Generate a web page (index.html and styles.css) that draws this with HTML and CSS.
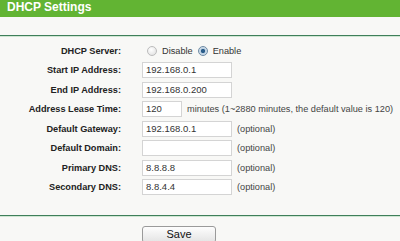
FILE: index.html
```html
<!DOCTYPE html>
<html>
<head>
<meta charset="utf-8">
<link rel="stylesheet" href="styles.css">
</head>
<body>
<div class="header">DHCP Settings</div>
<div class="sep"></div>
<div class="form">
  <div class="row">
    <div class="label">DHCP Server:</div>
    <div class="field">
      <span class="radio"></span><span class="rtext">Disable</span>
      <span class="radio on"></span><span class="rtext">Enable</span>
    </div>
  </div>
  <div class="row">
    <div class="label">Start IP Address:</div>
    <div class="field"><span class="input">192.168.0.1</span></div>
  </div>
  <div class="row">
    <div class="label">End IP Address:</div>
    <div class="field"><span class="input">192.168.0.200</span></div>
  </div>
  <div class="row">
    <div class="label">Address Lease Time:</div>
    <div class="field"><span class="input short">120</span><span class="note">minutes (1~2880 minutes, the default value is 120)</span></div>
  </div>
  <div class="row">
    <div class="label">Default Gateway:</div>
    <div class="field"><span class="input">192.168.0.1</span><span class="note">(optional)</span></div>
  </div>
  <div class="row">
    <div class="label">Default Domain:</div>
    <div class="field"><span class="input"></span><span class="note">(optional)</span></div>
  </div>
  <div class="row">
    <div class="label">Primary DNS:</div>
    <div class="field"><span class="input">8.8.8.8</span><span class="note">(optional)</span></div>
  </div>
  <div class="row">
    <div class="label">Secondary DNS:</div>
    <div class="field"><span class="input">8.8.4.4</span><span class="note">(optional)</span></div>
  </div>
</div>
<div class="sep bottom"></div>
<div class="actions"><span class="button">Save</span></div>
</body>
</html>
```
FILE: styles.css
```css
html, body {
  margin: 0;
  padding: 0;
  background: #f8f8f6;
  font-family: "Liberation Sans", Arial, sans-serif;
  color: #222;
  overflow: hidden;
}
.header {
  height: 17px;
  background: #62b433;
  color: #fff;
  font-weight: bold;
  font-size: 12px;
  line-height: 15px;
  padding-left: 7px;
  box-sizing: border-box;
}
.sep {
  margin-top: 18px;
  height: 1px;
  background: #3f7f5a;
  border-bottom: 1px solid #cfe6d2;
}
.form {
  padding-top: 4px;
}
.row {
  display: flex;
  align-items: center;
  height: 19.5px;
}
.label {
  width: 121px;
  flex: none;
  text-align: right;
  font-weight: bold;
  font-size: 9.2px;
  color: #222;
  white-space: nowrap;
}
.field {
  display: flex;
  align-items: center;
  padding-left: 21px;
  font-size: 9.2px;
  white-space: nowrap;
}
.input {
  box-sizing: border-box;
  flex: none;
  width: 90px;
  height: 16px;
  background: #fff;
  border: 1px solid #d4d4d4;
  font-size: 9.5px;
  line-height: 14px;
  padding-left: 3px;
  color: #333;
}
.input.short {
  width: 40px;
}
.note {
  margin-left: 5px;
  color: #444;
}
.radio {
  box-sizing: border-box;
  flex: none;
  width: 10px;
  height: 10px;
  border-radius: 50%;
  border: 1px solid #bcbcbc;
  background: radial-gradient(circle at 40% 35%, #fff, #ddd);
  margin-left: 5px;
  margin-right: 5px;
}
.radio.on {
  border-color: #6d8aa4;
  background: radial-gradient(circle at 50% 50%, #2b5d8a 0 30%, #bcd0e2 45%, #e8eef4 100%);
}
.rtext {
  color: #333;
}
.sep.bottom {
  margin-top: 18px;
}
.actions {
  padding-left: 142px;
  padding-top: 7px;
}
.button {
  display: inline-block;
  box-sizing: border-box;
  width: 74px;
  height: 17px;
  border: 1px solid #9a9a9a;
  border-radius: 3px;
  background: linear-gradient(#fdfdfd, #e4e4e4);
  text-align: center;
  font-size: 11px;
  line-height: 15px;
  color: #111;
}
```
